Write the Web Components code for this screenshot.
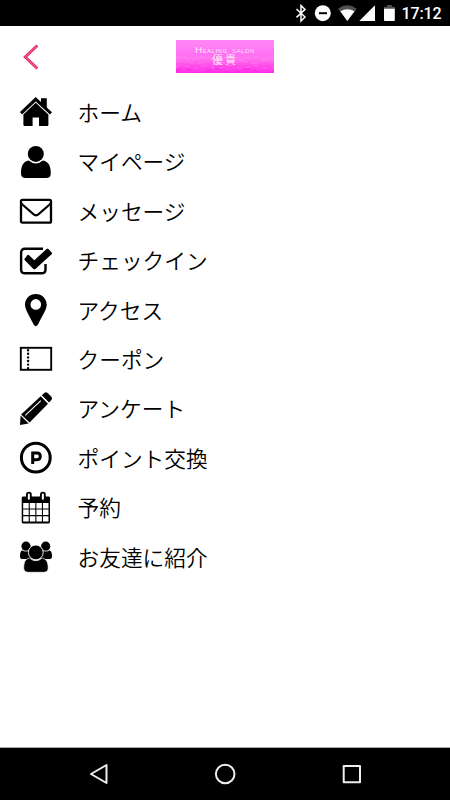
<!DOCTYPE html>
<html lang="ja"><head><meta charset="utf-8"><title>Menu</title>
<style>
html,body{margin:0;height:100%;background:#fff}
body{font-family:"Noto Sans CJK JP",sans-serif;color:#000;overflow:hidden}
</style></head><body>
<salon-app></salon-app>
<script>
const icons={
home:`<path d="M0 16 15.7 1 21 6V2.2h5.8v9.2l5.2 4.9-2 2.3L15.7 5.4 2 18.6Z"/><path d="M3.4 18.4 15.7 6.7 28.4 18.4V28.8q0 1.2-1.2 1.2H19v-8.4h-6.4V30H4.6q-1.2 0-1.2-1.2Z"/>`,
person:`<circle cx="15.8" cy="7.9" r="8"/><path d="M8.8 14.4Q15.8 20.5 22.8 14.4C29 15.6 30.8 20 30.8 27.5Q30.8 32 26 32H5.8Q1 32 1 27.5C1 20 2.8 15.6 8.8 14.4Z"/>`,
mail:`<g fill="none" stroke="#000" stroke-width="2.3"><rect x="1" y="4.9" width="30" height="22.8" rx="1.5"/><path d="M1.2 8.5 13.2 19Q16 21.7 18.8 19L30.8 8.5"/></g>`,
check:`<path d="M23 3.8H5Q1.1 3.8 1.1 7.8V24.4Q1.1 28.3 5 28.3H21.5Q25.5 28.3 25.5 24.4V19" fill="none" stroke="#000" stroke-width="2.4"/><path d="M7.5 10.1q.8-.6 1.6.2l5.2 5L26.6 4q.9-.8 1.8.1l3.3 3.3q.8.9-.1 1.8L15.4 23.9q-1 .9-2 0L4.8 15.2q-.8-.9 0-1.8Z"/>`,
pin:`<path fill-rule="evenodd" d="M15.8 0C9.6 0 5 4.7 5 10.6c0 5.3 3.8 10.2 8.8 20.2q2 2.7 4 0c5-10 8.9-14.9 8.9-20.2C26.7 4.7 22 0 15.8 0Zm0 5.1a5.3 5.3 0 1 1 0 10.6 5.3 5.3 0 0 1 0-10.6Z"/>`,
coupon:`<rect x=".8" y="4.8" width="30.4" height="22" fill="none" stroke="#000" stroke-width="1.9"/><path d="M8.1 7.2V26" fill="none" stroke="#000" stroke-width="2.4" stroke-linecap="round" stroke-dasharray="0 3.6"/>`,
pencil:`<path d="M21.8 2.3 24.6-.3q1.5-1.1 3 .2l3.8 3.9q1.3 1.5.1 3L29.1 9.6Z"/><path d="M20.7 3.3 28 10.7 9.6 29.6 1.1 21.5Z"/><path d="M5.3 22.4 20.8 7.6" stroke="#fff" stroke-width="1.1"/><path d="m.6 22.6 8 8L0 32Z"/>`,
point:`<circle cx="15.8" cy="15.7" r="14.4" fill="none" stroke="#000" stroke-width="3"/><path d="M12.7 22.1V10.9h4.4q3.2 0 3.2 3.4t-3.2 3.4H13" fill="none" stroke="#000" stroke-width="3"/>`,
calendar:`<path d="M1.7 6q0-1.4 1.4-1.4H28.6Q30 4.6 30 6v24q0 1.4-1.4 1.4H3.1q-1.4 0-1.4-1.4Z"/><path fill="#fff" d="M3.2 11h5.5v5.4H3.2Zm6.6 0h5.5v5.4H9.8Zm6.6 0h5.5v5.4h-5.5Zm6.6 0h5.5v5.4H23ZM3.2 17.5h5.5V23H3.2Zm6.6 0h5.5V23H9.8Zm6.6 0h5.5V23h-5.5Zm6.6 0h5.5V23H23ZM3.2 24.2h5.5v5.4H3.2Zm6.6 0h5.5v5.4H9.8Zm6.6 0h5.5v5.4h-5.5Zm6.6 0h5.5v5.4H23Z"/><g fill="#fff" stroke="#000" stroke-width="1.9"><rect x="6.9" y=".6" width="3.9" height="8" rx="1.8"/><rect x="20.9" y=".6" width="3.9" height="8" rx="1.8"/></g>`,
group:`<circle cx="6" cy="5.2" r="4.6"/><circle cx="25.7" cy="5.2" r="4.6"/><path d="M2 9.2Q6 12 10 9.2L13 15 11 18H2Q0 18 0 15 0 10.6 2 9.2ZM29.8 9.2q-4 2.8-8 0L19 15l2 3h9q2 0 2-3 0-4.4-2.2-5.8Z"/><circle cx="15.8" cy="11.4" r="7.4" stroke="#fff" stroke-width=".9"/><path stroke="#fff" stroke-width=".7" d="M9.5 17Q15.8 22.5 22.2 17C26.5 18 28.2 21 28.2 27.3q0 4-4 4H7.7q-4 0-4-4C3.7 21 5.2 18 9.5 17Z"/>`};
const define=(name,html)=>customElements.define(name,class extends HTMLElement{
 constructor(){super();this.attachShadow({mode:'open'}).innerHTML=html}});

customElements.define('menu-row',class extends HTMLElement{
 constructor(){super();this.attachShadow({mode:'open'})}
 connectedCallback(){this.shadowRoot.innerHTML=`<style>
:host{display:flex;align-items:center;gap:25.5px;height:49.4px;padding-left:20px;font-size:21.7px;font-weight:350;line-height:30px;white-space:nowrap}
svg{width:32px;height:32px;flex:none;overflow:visible}span{padding-bottom:.8px}</style>
<svg viewBox="0 0 32 32">${icons[this.getAttribute('icon')]}</svg><span><slot></slot></span>`}
});
define('status-bar',`<style>
:host{display:flex;height:26px;background:#000;color:#fff;justify-content:flex-end;align-items:center;box-sizing:border-box;padding-right:8.5px;font:500 16px/26px Roboto,sans-serif}
svg{width:104px;height:26px;margin-right:5px}span{padding-top:2px;letter-spacing:-.1px}</style>
<svg viewBox="292 0 104 26"><path d="m296.5 9 8.5 8-4 4V5.5l4 3.9-8.5 8" fill="none" stroke="#fff" stroke-width="1.5"/><circle cx="322.8" cy="13.2" r="8" fill="#fff"/><path d="M319 13.2h8" stroke="#000" stroke-width="2"/><path d="M338 8.7Q347.3 2 356.7 8.7L347.3 20.8Z" fill="#505050"/><path d="M340.3 11.3q7-4.2 14.2 0l-7.2 9.7Z" fill="#fff"/><path d="M359.3 21H375V5.3Z" fill="#fff"/><path d="M384 6.7h3V5h4.8v1.7h3V9H384Z" fill="#505050"/><path d="M384 8.7h10.8V20q0 1-1 1H385q-1 0-1-1Z" fill="#fff"/></svg><span>17:12</span>`);
define('salon-logo',`<style>
:host{display:flex;flex-direction:column;align-items:center;box-sizing:border-box;width:98px;height:33px;padding-top:5px;color:#ffe6f8;background:linear-gradient(#ff83f5 0 14%,#ff70f5 42%,#ff75ed 56%,#ff50ea 76%,#ff32e6);position:relative;overflow:hidden}
svg{position:absolute;inset:0;width:98px;height:33px}
span{position:relative;white-space:nowrap}
.en{display:flex;align-items:baseline;font:6px/9px "Liberation Sans",sans-serif;letter-spacing:.5px;height:9px}.en b{font:9.5px/9px "Liberation Sans",sans-serif}
.ja{font:11px/12px "Liberation Sans","Noto Sans CJK JP",sans-serif;letter-spacing:2px}</style>
<svg viewBox="0 0 98 33"><g fill="none" stroke="#ff94f6" stroke-width="1.2" opacity=".4"><path d="M0 18q5-3 11 0t12 0 12 0 12 0 12 0 12 0 12 0 15 0" stroke-dasharray="5 3"/><path d="M0 22q7-3 14 0t14 0 14 0 14 0 14 0 14 0 14 0" stroke-dasharray="7 4"/><path d="M0 27q6-3 12 0t12 0 12 0 12 0 12 0 12 0 12 0 14 0" stroke-dasharray="4 5"/></g><path d="M0 31q8-4 16 0t16 0 16 0 16 0 16 0 18 0" fill="none" stroke="#fa22dc" stroke-width="1.5" stroke-dasharray="6 4" opacity=".6"/></svg>
<span class="en"><b>H</b><span>EALING&nbsp; SALON</span></span><span class="ja">優貴</span>`);
define('app-header',`<style>
:host{display:grid;grid-template-columns:1fr 98px 1fr;align-items:center;height:61.7px;box-sizing:border-box}
svg{width:16px;height:27px;margin-left:23px}</style>
<svg viewBox="0 0 16 27"><path d="m14.3 2.5-12 11.5 12 11.5" fill="none" stroke="#e22a70" stroke-width="3"/><path d="m14.3 2.5-12 11.5 12 11.5" fill="none" stroke="#fa709f" stroke-width="1"/></svg><salon-logo></salon-logo>`);
define('nav-bar',`<style>
:host{display:block;height:53px;background:#000;border-top:1px solid #aaa;box-sizing:border-box}svg{display:block;width:450px;height:52px}</style>
<svg viewBox="0 748 450 52"><g fill="none" stroke="#eee" stroke-width="2" stroke-linejoin="round"><path d="M106.5 765v18L91 774Z"/><circle cx="225.2" cy="774" r="9.3"/><path d="M343.7 766h16.3v16.2h-16.3Z"/></g></svg>`);
define('salon-app',`<style>:host{display:flex;flex-direction:column;height:800px;width:450px}main{flex:1;min-height:0}</style>
<status-bar></status-bar><app-header></app-header><main>
<menu-row icon="home">ホーム</menu-row><menu-row icon="person">マイページ</menu-row><menu-row icon="mail">メッセージ</menu-row><menu-row icon="check">チェックイン</menu-row><menu-row icon="pin">アクセス</menu-row><menu-row icon="coupon">クーポン</menu-row><menu-row icon="pencil">アンケート</menu-row><menu-row icon="point">ポイント交換</menu-row><menu-row icon="calendar">予約</menu-row><menu-row icon="group">お友達に紹介</menu-row></main><nav-bar></nav-bar>`);
</script></body></html>
